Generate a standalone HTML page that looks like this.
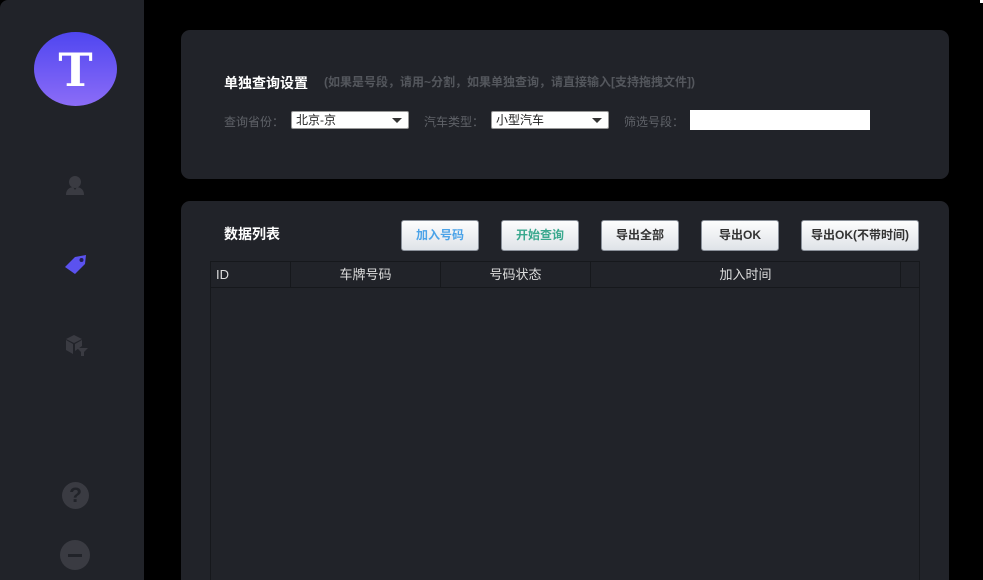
<html><head><style>
*{margin:0;padding:0;box-sizing:border-box}
html,body{width:983px;height:580px;overflow:hidden}
body{background:#000;position:relative;font-family:"Liberation Sans","Noto Sans CJK SC",sans-serif}
.side{position:absolute;left:0;top:0;width:144px;height:580px;background:#212329;border-top-left-radius:8px}
.logo{position:absolute;left:34px;top:32px;width:83px;height:74px;border-radius:50%;background:linear-gradient(#4f46f0,#8b6cf7);color:#fff;font:bold 46px "DejaVu Serif",serif;text-align:center;line-height:76px}
.panel{position:absolute;left:181px;width:768px;background:#212329;border-radius:9px}
.t{position:absolute;color:#fff;font-weight:bold;font-size:14px}
.lbl{position:absolute;color:#5f6268;font-size:12px}
.sel{position:absolute;height:18px;background:#fff;border:1px solid #999;border-radius:2px;font-size:12px;color:#222;padding-left:4px;line-height:16px}
.sel:after{content:"";position:absolute;right:6px;top:6px;border:5px solid transparent;border-top:5px solid #333;border-bottom:0}
.btn{position:absolute;top:220px;height:31px;border-radius:3px;background:linear-gradient(#fdfdfd,#dfe3e8);border:1px solid #8a9099;font-size:12px;font-weight:bold;text-align:center;line-height:29px;color:#333}
.th{position:absolute;top:262px;height:26px;color:#ddd;font-size:13px;line-height:26px;text-align:center;border-right:1px solid #16181c}
</style></head><body>
<div style="position:absolute;right:0;top:0;width:3px;height:3px;background:#fff"></div>
<div class="side">
<div class="logo">T</div>
<svg style="position:absolute;left:64px;top:173px" width="22" height="24"><circle cx="11" cy="9" r="6" fill="#3a3b42"/><path d="M2 22 q0-7 7-8 l2 3 2-3 q7 1 7 8z" fill="#3a3b42"/></svg>
<svg style="position:absolute;left:63px;top:252px" width="26" height="24"><path d="M2 15 L12 5 L23 3 L22 12 L12 22z" fill="#5b52ef"/><circle cx="18.5" cy="8" r="2" fill="#221e55"/></svg>
<svg style="position:absolute;left:64px;top:333px" width="26" height="26"><path d="M2 6 L10 2 L18 6 L10 10z" fill="#3a3b42"/><path d="M2 7 L9 11 L9 21 L2 17z M11 11 L18 7 L18 13 L11 18z" fill="#3a3b42"/><path d="M13 15 h11 l-4 4 v4 h-3 v-4z" fill="#3a3b42"/></svg>
<div style="position:absolute;left:62px;top:482px;width:27px;height:27px;border-radius:50%;background:#3a3b42;color:#212329;font:bold 21px 'Liberation Sans';text-align:center;line-height:27px">?</div>
<div style="position:absolute;left:60px;top:540px;width:30px;height:30px;border-radius:50%;background:#3a3b42"><div style="position:absolute;left:8px;top:14px;width:14px;height:3px;background:#212329"></div></div>
</div>
<div class="panel" style="top:30px;height:149px"></div>
<div class="t" style="left:224px;top:73px">单独查询设置</div>
<div class="lbl" style="left:324px;top:73px;font-weight:bold;color:#54575d">(如果是号段，请用~分割，如果单独查询，请直接输入[支持拖拽文件])</div>
<div class="lbl" style="left:224px;top:113px">查询省份：</div>
<div class="sel" style="left:291px;top:111px;width:118px">北京-京</div>
<div class="lbl" style="left:424px;top:113px">汽车类型：</div>
<div class="sel" style="left:491px;top:111px;width:118px">小型汽车</div>
<div class="lbl" style="left:624px;top:113px">筛选号段：</div>
<div style="position:absolute;left:690px;top:110px;width:180px;height:20px;background:#fff"></div>
<div class="panel" style="top:201px;height:379px;border-bottom-left-radius:0;border-bottom-right-radius:0"></div>
<div class="t" style="left:224px;top:224px">数据列表</div>
<div class="btn" style="left:401px;width:78px;color:#4ba3e8">加入号码</div>
<div class="btn" style="left:501px;width:78px;color:#3aa88e">开始查询</div>
<div class="btn" style="left:601px;width:78px">导出全部</div>
<div class="btn" style="left:701px;width:78px">导出OK</div>
<div class="btn" style="left:801px;width:118px">导出OK(不带时间)</div>
<div style="position:absolute;left:210px;top:261px;width:710px;height:330px;border:1px solid #16181c"></div>
<div style="position:absolute;left:210px;top:287px;width:710px;height:1px;background:#16181c"></div>
<div class="th" style="left:210px;width:81px;text-align:left;padding-left:6px">ID</div>
<div class="th" style="left:291px;width:150px">车牌号码</div>
<div class="th" style="left:441px;width:150px">号码状态</div>
<div class="th" style="left:591px;width:310px">加入时间</div>
</body></html>
